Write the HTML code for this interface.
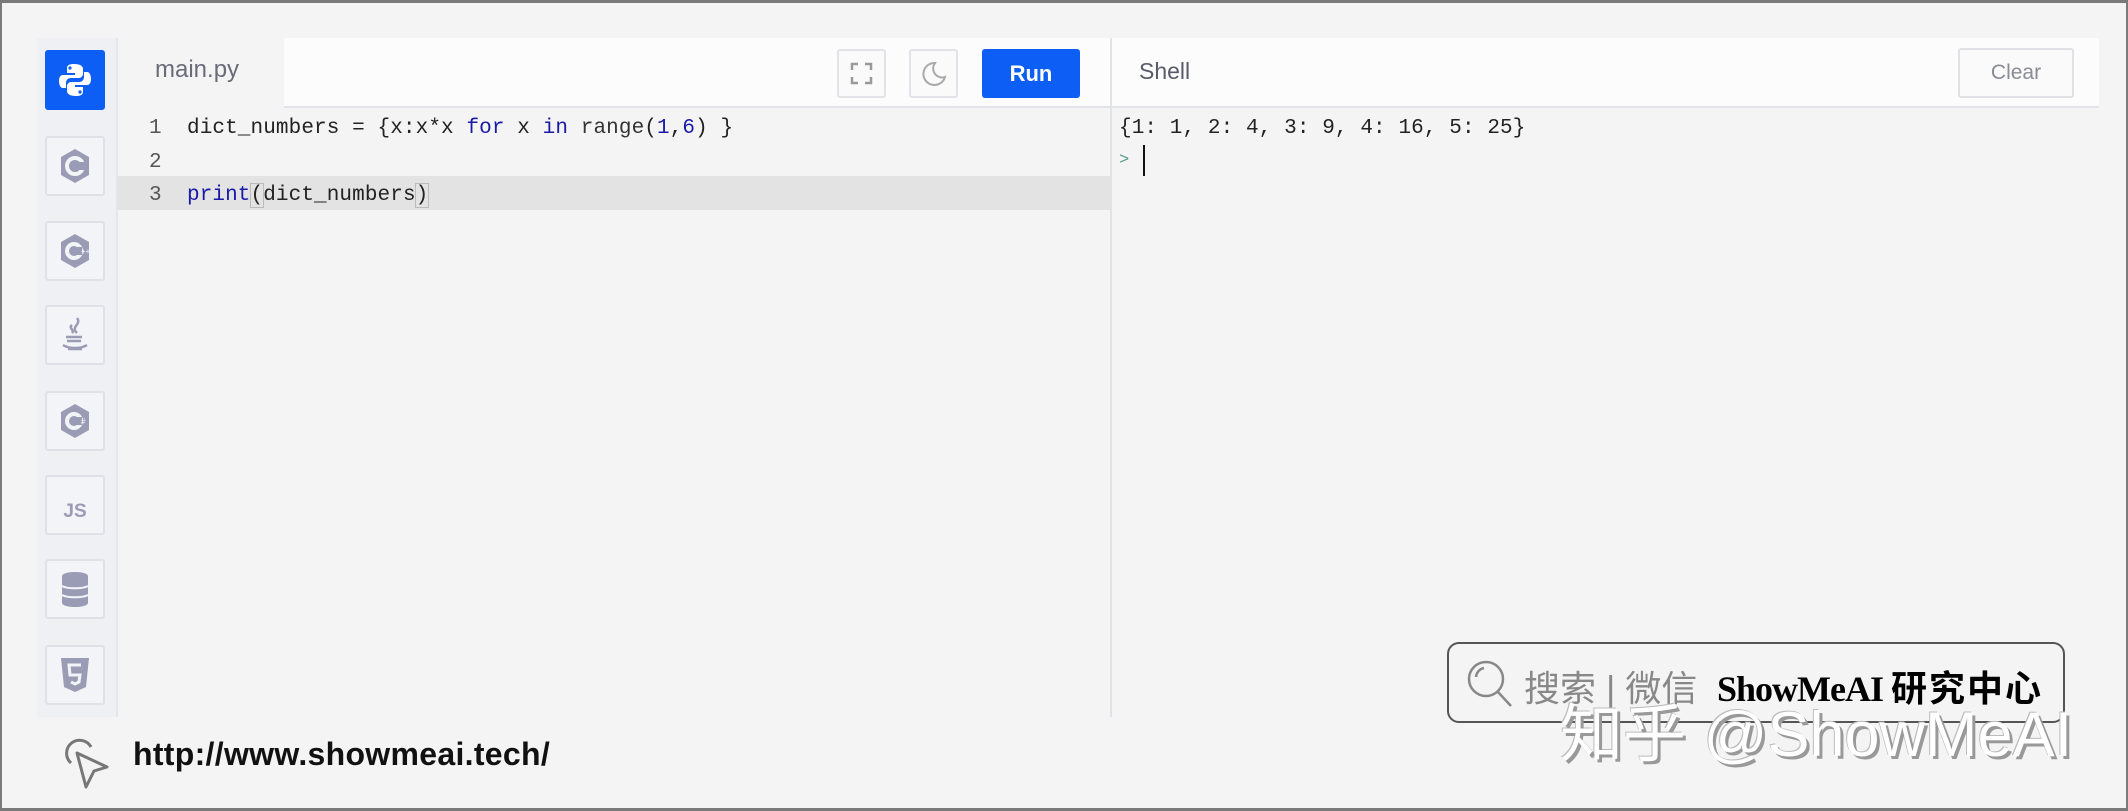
<!DOCTYPE html>
<html><head><meta charset="utf-8"><style>
*{margin:0;padding:0;box-sizing:border-box}
body{width:2128px;height:811px;background:#f4f4f4;position:relative;overflow:hidden;font-family:"Liberation Sans",sans-serif}
.frame{position:absolute;left:0;top:0;width:2128px;height:811px;border:2px solid #7a7a7a;border-top-width:3px;border-bottom-width:3px}
.side{position:absolute;left:37px;top:38px;width:81px;height:679px;background:#eef0f4;border-right:2px solid #e4e6ec}
.btn{position:absolute;left:8px;width:60px;height:60px;border:2px solid #e0e1e8;border-radius:3px;background:#f3f4f7;display:flex;align-items:center;justify-content:center}
.btn.on{background:#0d5ef5;border-color:#0d5ef5}
.tabbar{position:absolute;left:284px;top:38px;width:826px;height:70px;background:#fcfcfc;border-bottom:2px solid #e2e3e8}
.tab{position:absolute;left:155px;top:56px;font-size:24px;color:#6a6b78}
.ib{position:absolute;top:49px;width:49px;height:49px;border:2px solid #e2e3e8;border-radius:3px;background:#fafafa}
.run{position:absolute;left:982px;top:49px;width:98px;height:49px;background:#0d5ef5;border-radius:3px;color:#fff;font-weight:bold;font-size:22px;text-align:center;line-height:49px}
.div{position:absolute;left:1110px;top:38px;width:2px;height:679px;background:#e2e3e8}
.shellbar{position:absolute;left:1112px;top:38px;width:987px;height:70px;background:#fcfcfc;border-bottom:2px solid #e2e3e8}
.clear{position:absolute;left:1958px;top:48px;width:116px;height:50px;border:2px solid #e0e1e6;border-radius:3px;background:#fafafa;color:#8a8b96;font-size:21px;text-align:center;line-height:46px}
.code{position:absolute;font-family:"Liberation Mono",monospace;font-size:21px;color:#222;white-space:pre;letter-spacing:0.1px}
.hl{position:absolute;left:118px;top:176px;width:992px;height:34px;background:#e3e3e3}
.kw{color:#1a1aa6}
.ln{color:#555}
</style></head><body>
<div class="frame"></div>
<div class="side">
 <div class="btn on" style="top:12px"><svg width="34" height="36" viewBox="0 0 34 36"><path d="M16 2c-7 0-7 3-7 5v4h8v2H5c-3 0-4 3-4 6s1 7 4 7h3v-5c0-3 2-5 5-5h8c2 0 4-2 4-4V7c0-3-3-5-9-5z" fill="#fff"/><circle cx="12" cy="6" r="1.6" fill="#0d5ef5"/><path d="M18 34c7 0 7-3 7-5v-4h-8v-2h12c3 0 4-3 4-6s-1-7-4-7h-3v5c0 3-2 5-5 5h-8c-2 0-4 2-4 4v5c0 3 3 5 9 5z" fill="#fff"/><circle cx="22" cy="30" r="1.6" fill="#0d5ef5"/></svg></div>
 <div class="btn" style="top:98px"><svg width="32" height="36" viewBox="0 0 32 36"><path d="M16 1L30 9v18L16 35 2 27V9z" fill="#9a9bb5"/><circle cx="16" cy="18" r="8" fill="none" stroke="#f3f4f7" stroke-width="4"/><rect x="18" y="14" width="8" height="8" fill="#9a9bb5"/></svg></div>
 <div class="btn" style="top:183px"><svg width="32" height="36" viewBox="0 0 32 36"><path d="M16 1L30 9v18L16 35 2 27V9z" fill="#9a9bb5"/><circle cx="15" cy="18" r="7" fill="none" stroke="#f3f4f7" stroke-width="4"/><rect x="16" y="14" width="7" height="8" fill="#9a9bb5"/><text x="22" y="21" font-size="8" fill="#f3f4f7" font-family="Liberation Sans">++</text></svg></div>
 <div class="btn" style="top:267px"><svg width="30" height="38" viewBox="0 0 30 38"><path d="M17 2c5 6-7 9 0 15M12 9c-4 3 3 5 0 8" stroke="#9a9bb5" stroke-width="2.5" fill="none"/><path d="M6 21h16M7 25h14M3 29c6 4 18 4 24 0M8 33h14" stroke="#9a9bb5" stroke-width="2.5" fill="none"/></svg></div>
 <div class="btn" style="top:353px"><svg width="32" height="36" viewBox="0 0 32 36"><path d="M16 1L30 9v18L16 35 2 27V9z" fill="#9a9bb5"/><circle cx="15" cy="18" r="7" fill="none" stroke="#f3f4f7" stroke-width="4"/><rect x="16" y="14" width="7" height="8" fill="#9a9bb5"/><text x="22" y="21" font-size="8" fill="#f3f4f7" font-family="Liberation Sans">#</text></svg></div>
 <div class="btn" style="top:437px"><span style="font-weight:bold;color:#9a9bb5;font-size:19px;margin-top:14px">JS</span></div>
 <div class="btn" style="top:521px"><svg width="28" height="36" viewBox="0 0 28 36"><ellipse cx="14" cy="5" rx="13" ry="4" fill="#9a9bb5"/><rect x="1" y="5" width="26" height="27" fill="#9a9bb5"/><ellipse cx="14" cy="32" rx="13" ry="4" fill="#9a9bb5"/><path d="M1 15c5 3 21 3 26 0M1 24c5 3 21 3 26 0" stroke="#f3f4f7" stroke-width="2" fill="none"/></svg></div>
 <div class="btn" style="top:607px"><svg width="30" height="36" viewBox="0 0 30 36"><path d="M1 1h28l-3 29-11 5-11-5z" fill="#9a9bb5"/><path d="M21 8H9l1 10h10l-1 7-4 2-4-2" stroke="#f3f4f7" stroke-width="3" fill="none"/></svg></div>
</div>
<div class="tabbar"></div>
<div class="tab">main.py</div>
<div class="ib" style="left:837px"><svg width="45" height="45" viewBox="0 0 45 45"><path d="M13 19v-6h6M26 13h6v6M32 26v6h-6M19 32h-6v-6" stroke="#999" stroke-width="2.5" fill="none"/></svg></div>
<div class="ib" style="left:909px"><svg width="45" height="45" viewBox="0 0 45 45"><path d="M24 12a11 11 0 1 0 10 14a9 9 0 0 1-10-14z" stroke="#aaa" stroke-width="2" fill="none"/></svg></div>
<div class="run">Run</div>
<div class="hl"></div>
<div class="code ln" style="left:149px;top:117px">1</div>
<div class="code ln" style="left:149px;top:151px">2</div>
<div class="code ln" style="left:149px;top:184px">3</div>
<div class="code" style="left:187px;top:117px">dict_numbers = {x:x*x <span class="kw">for</span> x <span class="kw">in</span> <span style="color:#333">range</span>(<span class="kw">1</span>,<span class="kw">6</span>) }</div>
<div class="code" style="left:187px;top:184px"><span class="kw">print</span><span style="outline:1px solid #bbb">(</span>dict_numbers<span style="outline:1px solid #bbb">)</span></div>
<div class="div"></div>
<div class="shellbar"></div>
<div style="position:absolute;left:1139px;top:58px;font-size:23px;color:#5a5b6a">Shell</div>
<div class="clear">Clear</div>
<div class="code" style="left:1119px;top:117px">{1: 1, 2: 4, 3: 9, 4: 16, 5: 25}</div>
<div class="code" style="left:1119px;top:151px;color:#5a9a8a;font-size:17px">&gt;</div>
<div style="position:absolute;left:1143px;top:145px;width:2px;height:31px;background:#111"></div>
<svg style="position:absolute;left:57px;top:735px" width="54" height="54" viewBox="0 0 54 54"><path d="M14 28a13 13 0 1 1 20-16" stroke="#777" stroke-width="3" fill="none"/><path d="M20 18l30 14-13 4-8 16z" stroke="#777" stroke-width="3" fill="#f4f4f4" stroke-linejoin="round"/></svg>
<div style="position:absolute;left:133px;top:736px;font-size:32px;font-weight:bold;color:#111;white-space:nowrap;letter-spacing:0.3px">http://www.showmeai.tech/</div>
<div style="position:absolute;left:1447px;top:642px;width:618px;height:81px;border:2px solid #555;border-radius:12px"></div>
<svg style="position:absolute;left:1464px;top:657px" width="56" height="56" viewBox="0 0 56 56"><circle cx="22" cy="22" r="17" stroke="#888" stroke-width="2.5" fill="none"/><path d="M34 35l13 14M12 20a10 10 0 0 1 8-9" stroke="#888" stroke-width="2.5" fill="none"/></svg>
<div style="position:absolute;left:1524px;top:660px;font-size:36px;color:#888;font-family:'Liberation Sans','Noto Sans CJK SC',sans-serif;white-space:nowrap">搜索 | 微信</div>
<div style="position:absolute;left:1717px;top:660px;font-size:36px;color:#000;font-weight:bold;font-family:'Liberation Serif','Noto Sans CJK SC',serif;white-space:nowrap;letter-spacing:-1px">ShowMeAI <span style="font-family:'Noto Sans CJK SC',sans-serif;letter-spacing:2px">研究中心</span></div>
<div style="position:absolute;left:1560px;top:684px;font-size:63px;color:#fff;font-family:'Liberation Sans','Noto Sans CJK SC',sans-serif;white-space:nowrap;text-shadow:3px 3px 0 #999,-1px -1px 0 #bbb">知乎 @ShowMeAI</div>
</body></html>
